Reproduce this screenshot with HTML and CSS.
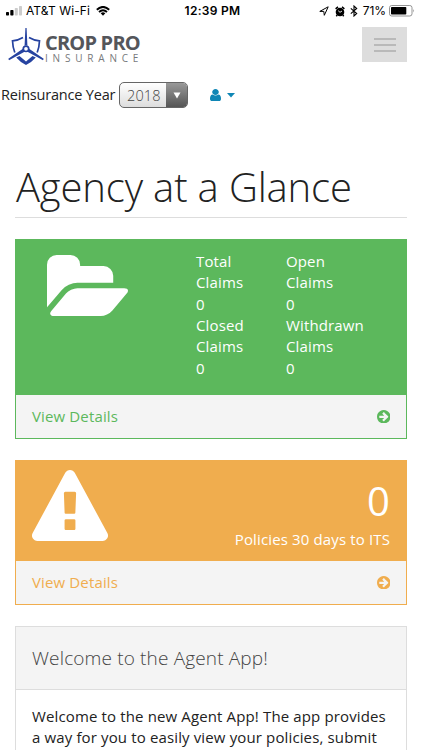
FILE: index.html
```html
<!DOCTYPE html>
<html lang="en">
<head>
<meta charset="utf-8">
<title>Crop Pro Insurance</title>
<link rel="stylesheet" href="styles.css">
</head>
<body>
<svg class="defs" width="0" height="0">
  <symbol id="arrow" viewBox="128 128 1536 1536"><path d="M1413 896q0-27-18-45l-362-362-91-91q-18-18-45-18t-45 18l-91 91q-18 18-18 45t18 45l189 189h-502q-26 0-45 19t-19 45v128q0 26 19 45t45 19h502l-189 189q-18 18-18 45t18 45l91 91q18 18 45 18t45-18l91-91 362-362q18-18 18-45zm251 0q0 209-103 385.500t-279.500 279.500-385.500 103-385.500-103-279.500-279.500-103-385.500 103-385.500 279.500-279.500 385.500-103 385.500 103 279.500 279.500 103 385.500z"/></symbol>
</svg>
<div class="status">
  <div class="status-left">
    <svg width="17" height="10" viewBox="0 0 17 10"><rect x="0" y="6" width="3" height="3.500" rx=".7"/><rect x="4.300" y="4" width="3.200" height="5.500" rx=".7"/><rect x="8.800" y="2" width="3" height="7.500" rx=".7" fill="#ccc"/><rect x="13" y="0" width="3" height="9.500" rx=".7" fill="#ccc"/></svg>
    <span class="carrier">AT&amp;T Wi-Fi</span>
    <svg class="wifi" width="14" height="10" viewBox="0 0 14 10"><path d="M.8 3.700Q7-1.900 13.200 3.700M3 6Q7 2.400 11 6" fill="none" stroke="#000" stroke-width="1.900"/><path d="M4.700 7.300Q7 5.300 9.300 7.300L7 9.800z"/></svg>
  </div>
  <div class="time">12:39 PM</div>
  <div class="status-right">
    <svg width="10" height="10" viewBox="0 0 10 10"><path d="M.8 5.400L9.200.8 5.300 9.300 4.800 5.400z" fill="none" stroke="#000" stroke-width="1"/></svg>
    <svg class="alarm" width="10" height="11" viewBox="0 0 10 11"><circle cx="5" cy="6" r="4.300"/><path d="M.6 2.800L3 .9M9.400 2.800L7 .9M2.200 9L1.300 10.200M7.800 9l.9 1.200" stroke="#000" stroke-width="1.500"/><path d="M3.200 4.700L5 6.300 7 5" fill="none" stroke="#fff" stroke-width=".9"/></svg>
    <svg class="bt" width="8" height="12" viewBox="0 0 8 12"><path d="M.8 3.300L6.700 8.500 4 11V1l2.700 2.500L.8 8.700" fill="none" stroke="#000" stroke-width="1.100"/></svg>
    <span class="percent">71%</span>
    <svg width="26" height="12" viewBox="0 0 26 12"><rect x=".5" y=".5" width="22.500" height="10.500" rx="2.200" fill="#fff" stroke="#888" stroke-width=".9"/><rect x="2" y="2" width="15.300" height="7.500" rx=".7"/><path d="M24.300 4q1.600 1.700 0 3.500z" fill="#888"/></svg>
  </div>
</div>
<header class="header">
  <div class="logo">
    <svg width="37" height="39" viewBox="0 0 37 39" fill="none" stroke="#2643a0" stroke-width="1.700">
      <path d="M15 10.500Q10 13.500 4.500 13.800C4.600 18 5.300 21.500 6.800 25.500M21 10.500q5 3 10.500 3.300C31.400 18 30.700 21.500 29.200 25.500"/>
      <path d="M17.400 1h1.200L19.400 18.500h-2.800zM16 21L.3 31.800 1 33.200 17 24.500zM20 21l15.700 10.800L35 33.200 19 24.500z" fill="#2643a0" stroke="none"/>
      <circle cx="18" cy="21.800" r="2.700" fill="#fff"/>
      <path d="M8.200 30.500L11.500 29 18 34.500 24.500 29l3.300 1.500Q24 35 18 38 12 35 8.200 30.500z" fill="#2643a0" stroke="none"/>
    </svg>
    <div class="wordmark"><div class="brand">CROP PRO</div><div class="sub">INSURANCE</div></div>
  </div>
  <div class="menu"><i></i><i></i><i></i></div>
</header>
<div class="toolbar">
  <span class="year-label">Reinsurance Year</span>
  <div class="select"><span>2018</span><b><svg width="8" height="7" viewBox="0 0 8 7"><path d="M.5.500h7L4 6.500z" fill="#fff"/></svg></b></div>
  <svg class="user" width="11" height="12" viewBox="256 128 1280 1536" preserveAspectRatio="none"><path d="M1536 1399q0 109-62.500 187t-150.500 78h-854q-88 0-150.500-78t-62.500-187q0-85 8.500-160.500t31.500-152 58.500-131 94-89 134.500-34.500q131 128 313 128t313-128q76 0 134.500 34.500t94 89 58.500 131 31.500 152 8.500 160.500zm-256-887q0 159-112.500 271.500t-271.500 112.500-271.500-112.500-112.500-271.500 112.500-271.500 271.500-112.500 271.500 112.500 112.500 271.500z"/></svg>
  <svg class="caret" width="8" height="5" viewBox="0 0 8 5"><path d="M0 0h8L4 4.500z"/></svg>
</div>
<main>
  <h1>Agency at a Glance</h1>
  <section class="card green">
    <div class="card-top claims">
      <svg class="folder" width="81" height="61" viewBox="0 128 1879 1408" preserveAspectRatio="none"><path d="M1879 952q0 31-31 66l-336 396q-43 51-120.500 86.500t-143.500 35.500h-1088q-34 0-60.500-13t-26.500-43q0-31 31-66l336-396q43-51 120.500-86.500t143.500-35.500h1088q34 0 60.500 13t26.500 43zm-343-344v160h-832q-94 0-197 47.500t-164 119.500l-337 396-5 6q0-4-.5-12.500t-.5-12.500v-960q0-92 66-158t158-66h320q92 0 158 66t66 158v32h544q92 0 158 66t66 158z"/></svg>
      <div class="stats">
        <div>Total<br>Claims<br>0</div><div>Open<br>Claims<br>0</div>
        <div>Closed<br>Claims<br>0</div><div>Withdrawn<br>Claims<br>0</div>
      </div>
    </div>
    <div class="card-foot"><span>View Details</span><svg width="13.500" height="13.500"><use href="#arrow"/></svg></div>
  </section>
  <section class="card orange">
    <div class="card-top policies">
      <svg class="warning" width="76" height="71" viewBox="0 0 1792 1664" preserveAspectRatio="none"><path d="M1024 1375v-190q0-14-9.500-23.500t-22.500-9.500h-192q-13 0-22.500 9.500t-9.500 23.500v190q0 14 9.500 23.500t22.500 9.500h192q13 0 22.500-9.500t9.500-23.500zm-2-374l18-459q0-12-10-19-13-11-24-11h-220q-11 0-24 11-10 7-10 21l17 457q0 10 10 16.500t24 6.500h185q14 0 23.500-6.500t10.500-16.500zm-14-934l768 1408q35 63-2 126-17 29-46.500 46t-63.500 17h-1536q-34 0-63.500-17t-46.500-46q-37-63-2-126l768-1408q17-31 47-49t65-18 65 18 47 49z"/></svg>
      <div class="count"><div class="huge">0</div><div>Policies 30 days to ITS</div></div>
    </div>
    <div class="card-foot"><span>View Details</span><svg width="13.500" height="13.500"><use href="#arrow"/></svg></div>
  </section>
  <section class="welcome">
    <h3>Welcome to the Agent App!</h3>
    <p>Welcome to the new Agent App! The app provides<br>a way for you to easily view your policies, submit</p>
  </section>
</main>
</body>
</html>
```
FILE: styles.css
```css
* { box-sizing: border-box; }
body { display: flex; flex-direction: column; height: 750px; overflow: hidden; margin: 0; background: #fff; color: #222; font: 15px/21.4px "Open Sans", sans-serif; letter-spacing: .135px; }
svg { display: block; flex: none; }
.defs { position: absolute; }
.status { display: grid; flex: none; grid-template-columns: 1fr auto 1fr; align-items: center; height: 22px; padding: 0 7px 0 6px; color: #000; font: 12px/22px Inter, sans-serif; }
.status-left, .status-right { display: flex; align-items: center; }
.status-right { justify-content: flex-end; }
.carrier { margin-left: 3px; font-size: 12px; letter-spacing: .1px; white-space: nowrap; }
.wifi { margin-left: 6px; }
.time { padding-left: 4px; font-weight: 600; font-size: 12px; letter-spacing: .3px; }
.alarm { margin-left: 6px; }
.bt { margin-left: 5px; }
.percent { margin: 0 3px 0 5px; font-size: 12px; letter-spacing: -.1px; }
.header { display: flex; flex: none; justify-content: space-between; height: 51px; padding: 5px 15px 0 8px; }
.logo { display: flex; }
.wordmark { padding-top: 6px; white-space: nowrap; }
.brand { height: 20px; color: #54565b; font-size: 20px; line-height: 20px; font-weight: 700; letter-spacing: -.800px; }
.sub { color: #77797c; font: 10px/10px "Open Sans", sans-serif; letter-spacing: 4.800px; }
.menu { display: flex; flex-direction: column; gap: 4px; align-items: center; justify-content: center; width: 45px; height: 35px; background: #ddd; }
.menu i { width: 22px; height: 2px; background: #b9b9b9; }
.toolbar { display: flex; flex: none; align-items: center; height: 45px; padding-bottom: 1px; }
.year-label { width: 116px; padding-left: 1px; font-size: 14.500px; letter-spacing: -.2px; white-space: nowrap; }
.select { display: flex; flex: none; width: 69px; height: 26px; margin-left: 3px; border: 1px solid #666; border-radius: 5px; overflow: hidden; color: #444; background: linear-gradient(#fff, #ddd); line-height: 25px; }
.select span { flex: 1; padding-left: 7px; font-size: 14.500px; font-weight: 300; }
.select b { display: flex; width: 21px; align-items: center; justify-content: center; background: linear-gradient(#999, #555); }
.user { margin-left: 22px; fill: #0f86b5; }
.caret { margin-left: 6px; fill: #0f86b5; }
main { flex: 1; min-height: 0; display: flex; flex-direction: column; padding: 0 15px; }
h1 { flex: none; height: 100px; margin: 0 0 21px; padding: 41px 0 0 1px; border-bottom: 1px solid #ddd; color: #222; font-size: 40px; line-height: 56px; font-weight: 300; letter-spacing: -.15px; white-space: nowrap; }
.card { flex: none; margin-bottom: 21px; border: 1px solid var(--c); color: #fff; }
.green { --c: #5cb85c; }
.orange { --c: #f0ad4e; }
.card-top { display: flex; background: var(--c); fill: #fff; }
.claims { height: 155px; padding: 11px 0 0 31px; }
.folder { margin-top: 4px; }
.stats { display: grid; grid-template-columns: 90px 110px; grid-auto-rows: 64px; margin-left: 68px; }
.policies { height: 100px; padding: 9px 16px 0 16px; justify-content: space-between; }
.count { text-align: right; }
.huge { margin-top: 3px; font-size: 40px; line-height: 56px; }
.card-foot { display: flex; align-items: center; justify-content: space-between; height: 43px; padding: 0 16px; background: #f4f4f4; color: var(--c); fill: var(--c); }
.welcome { flex: 1; min-height: 0; border: 1px solid #ddd; border-bottom: 0; overflow: hidden; }
.welcome h3 { height: 63px; margin: 0; padding-left: 16px; border-bottom: 1px solid #ddd; background: #f4f4f4; color: #444; font-size: 19px; line-height: 62px; font-weight: 300; letter-spacing: .15px; }
.welcome p { margin: 16px 0 0 16px; white-space: nowrap; }
```
